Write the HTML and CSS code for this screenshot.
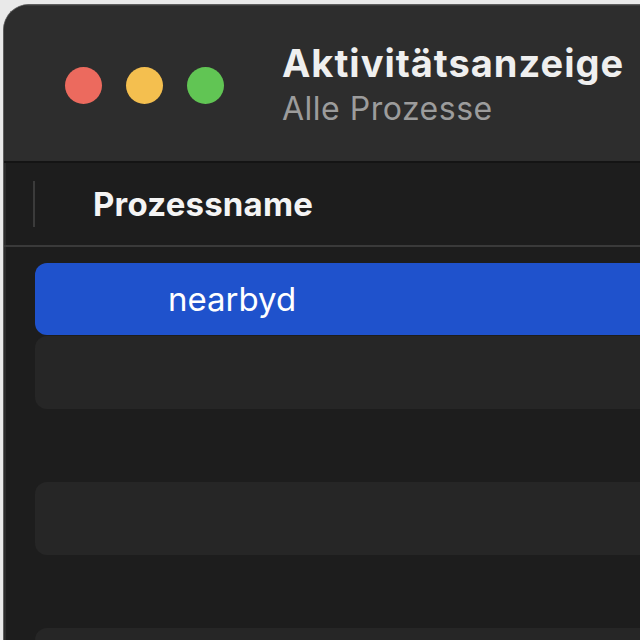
FILE: index.html
```html
<!DOCTYPE html>
<html lang="de">
<head>
<meta charset="utf-8">
<title>Aktivitätsanzeige</title>
<link rel="stylesheet" href="styles.css">
</head>
<body>
<div class="window">
  <header class="titlebar">
    <div class="lights">
      <span class="light red"></span>
      <span class="light yellow"></span>
      <span class="light green"></span>
    </div>
    <div class="titles">
      <div class="title">Aktivitätsanzeige</div>
      <div class="subtitle">Alle Prozesse</div>
    </div>
  </header>
  <div class="colheader">
    <span class="divider"></span>
    <span class="colname">Prozessname</span>
  </div>
  <div class="list">
    <div class="row selected"><span class="name">nearbyd</span></div>
    <div class="row alt"></div>
    <div class="row"></div>
    <div class="row alt"></div>
    <div class="row"></div>
    <div class="row alt"></div>
  </div>
</div>
</body>
</html>
```

FILE: styles.css
```css
html, body {
  margin: 0;
  padding: 0;
  background: #e9e9e9;
}
body {
  font-family: Inter, "Noto Sans", sans-serif;
}
.window {
  margin: 4px 0 0 3px;
  width: 636px;
  height: 635px;
  background: #1d1d1d;
  border-top: 1px solid #5e5e5e;
  border-left: 1px solid #5e5e5e;
  border-top-left-radius: 26px;
  overflow: hidden;
  box-shadow: inset 2px 0 0 #2b2b2b;
}
.titlebar {
  height: 158px;
  background: #2d2d2d;
  border-bottom: 2px solid #141414;
  display: flex;
  align-items: flex-start;
  box-sizing: border-box;
  border-top: 1px solid #3c3c3c;
}
.lights {
  display: flex;
  gap: 24px;
  padding: 61px 0 0 61px;
}
.light {
  width: 37px;
  height: 37px;
  border-radius: 50%;
}
.red { background: #ec6a5e; }
.yellow { background: #f4bf4f; }
.green { background: #61c554; }
.titles {
  padding: 35px 0 0 58px;
  white-space: nowrap;
}
.title {
  color: #efefef;
  font-weight: 700;
  font-size: 38px;
  line-height: 44px;
  letter-spacing: 1px;
}
.subtitle {
  color: #9c9c9c;
  font-size: 32px;
  line-height: 32px;
  letter-spacing: 0.5px;
  margin-top: 8px;
}
.colheader {
  height: 84px;
  display: flex;
  align-items: center;
  border-bottom: 2px solid #3a3a3a;
  box-sizing: border-box;
}
.divider {
  width: 2px;
  height: 46px;
  background: #3b3b3b;
  margin-left: 29px;
}
.colname {
  color: #f4f4f4;
  font-weight: 700;
  font-size: 33px;
  letter-spacing: 0.2px;
  margin-left: 58px;
}
.list {
  padding: 16px 0 0 31px;
}
.row {
  height: 73px;
  border-radius: 12px 0 0 12px;
  display: flex;
  align-items: center;
}
.row.alt {
  background: #262626;
}
.row.selected {
  height: 72px;
  margin-bottom: 1px;
  background: #1f52cc;
}
.name {
  color: #ffffff;
  font-size: 33px;
  margin-left: 133px;
}
```
